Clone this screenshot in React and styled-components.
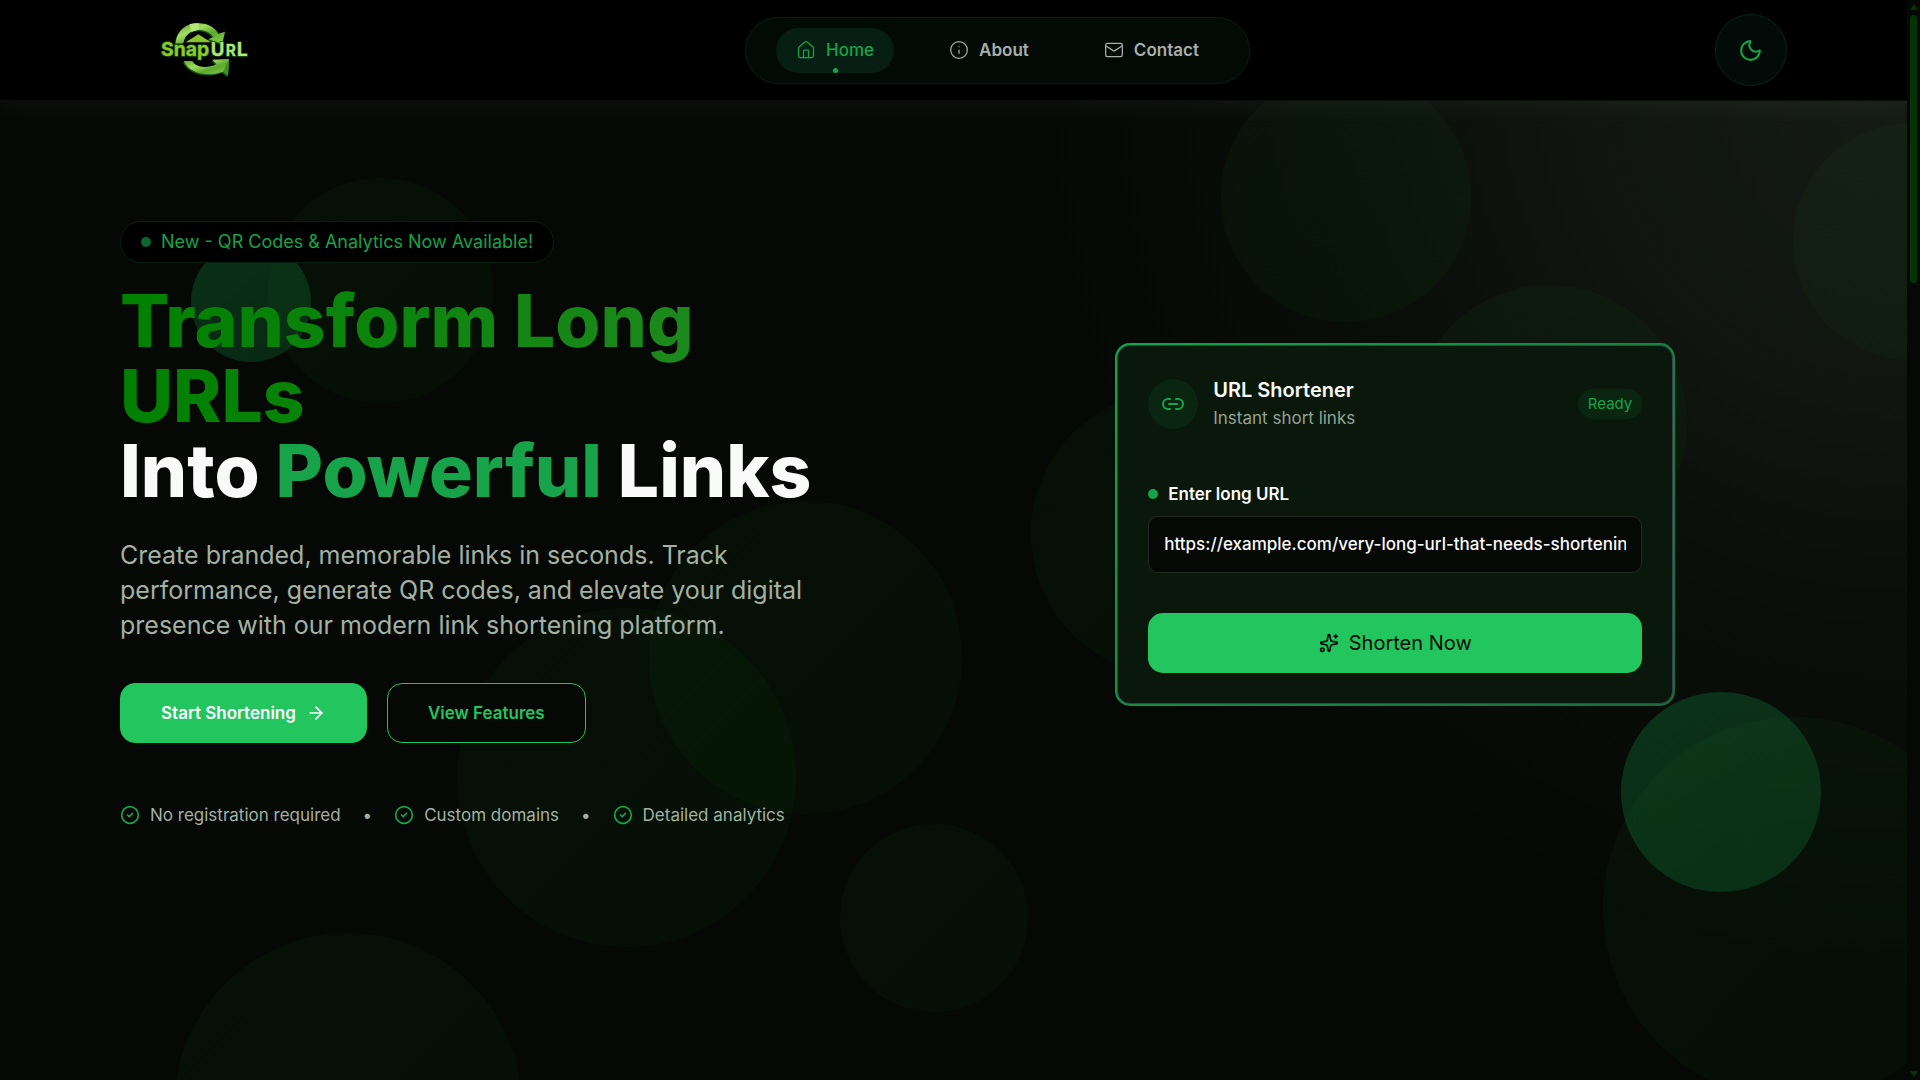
import React from "react";
import styled, { createGlobalStyle, css } from "styled-components";
import {
  ArrowRight,
  CircleCheck,
  House,
  Info,
  Link2,
  Mail,
  Moon,
  Sparkles,
} from "lucide-react";

const navLinks = [
  { label: "Home", icon: House, active: true },
  { label: "About", icon: Info },
  { label: "Contact", icon: Mail },
];

const perks = ["No registration required", "Custom domains", "Detailed analytics"];

const bubbles = [
  { x: 268, y: 178, size: 225 },
  { x: 1221, y: 72, size: 250 },
  { x: 1793, y: 123, size: 237 },
  { x: 1412, y: 285, size: 275 },
  { x: 1031, y: 392, size: 284 },
  { x: 649, y: 501, size: 313 },
  { x: 457, y: 608, size: 339 },
  { x: 840, y: 824, size: 188 },
  { x: 174, y: 933, size: 348 },
  { x: 1603, y: 717, size: 383 },
  { x: 191, y: 242, size: 120, bright: true },
  { x: 1621, y: 692, size: 200, bright: true },
];

function Logo() {
  return (
    <svg width="100" height="70" viewBox="-15 0 300 210" role="img" aria-label="SnapUrl">
      <defs>
        <linearGradient id="arc" x1="0" y1="0" x2="1" y2="1">
          <stop offset="0" stopColor="#4f9d22" />
          <stop offset="0.35" stopColor="#a3dc62" />
          <stop offset="0.6" stopColor="#5aa92c" />
          <stop offset="1" stopColor="#8fd04f" />
        </linearGradient>
        <linearGradient id="word" x1="0" y1="0" x2="1" y2="0">
          <stop offset="0" stopColor="#8cc925" />
          <stop offset="1" stopColor="#8fcb2e" />
        </linearGradient>
      </defs>
      <g fill="#14511a" transform="translate(-3 4)">
        <path d="M62 85C65 45 95 25 130 25C160 25 180 38 190 56L210 50L202 86L160 73L175 66C165 52 150 45 130 45C105 47 90 60 85 85Z" />
        <path d="M86 138L112 138C120 155 150 163 185 148L172 134L222 132L219 182L204 170C160 186 105 178 86 138Z" />
      </g>
      <g fill="url(#arc)">
        <path d="M62 85C65 45 95 25 130 25C160 25 180 38 190 56L210 50L202 86L160 73L175 66C165 52 150 45 130 45C105 47 90 60 85 85Z" />
        <path d="M86 138L112 138C120 155 150 163 185 148L172 134L222 132L219 182L204 170C160 186 105 178 86 138Z" />
      </g>
      <path d="M103 28C112 25 122 24 132 25L130 45C122 46 116 48 110 51Z" fill="#b5e878" />
      <path d="M222 132L219 182L204 170Z" fill="#3d8f22" />
      <path d="M92 82L130 58L168 82Z" fill="#86c52c" />
      <g
        fontFamily="Inter, sans-serif"
        fontWeight="700"
        stroke="#17591b"
        strokeWidth="4"
        paintOrder="stroke"
      >
        <text x="18" y="122" fontSize="58" fill="url(#word)">Snap</text>
        <g fill="#b0e676">
          <text x="167" y="124" fontSize="56">U</text>
          <text x="212" y="124" fontSize="46">R</text>
          <text x="245" y="124" fontSize="58">L</text>
        </g>
      </g>
    </svg>
  );
}

function Header() {
  return (
    <HeaderBar>
      <LogoLink href="#home">
        <Logo />
      </LogoLink>
      <Nav>
        {navLinks.map(({ label, icon: Icon, active }) => (
          <NavLink key={label} href={`#${label.toLowerCase()}`} $active={active}>
            <Icon size={20} strokeWidth={1.5} />
            {label}
          </NavLink>
        ))}
      </Nav>
      <ThemeButton type="button" aria-label="Toggle theme">
        <Moon size={25} />
      </ThemeButton>
    </HeaderBar>
  );
}

function ShortenerCard() {
  return (
    <CardFrame>
      <Card onSubmit={(e) => e.preventDefault()}>
        <CardHeader>
          <CardIcon>
            <Link2 size={24} />
          </CardIcon>
          <CardTitles>
            <h2>URL Shortener</h2>
            <p>Instant short links</p>
          </CardTitles>
          <Status>Ready</Status>
        </CardHeader>
        <Label htmlFor="long-url">
          <Dot />
          Enter long URL
        </Label>
        <UrlInput
          id="long-url"
          type="text"
          defaultValue="https://example.com/very-long-url-that-needs-shortening"
        />
        <SubmitButton type="submit">
          <Sparkles size={20} />
          Shorten Now
        </SubmitButton>
      </Card>
    </CardFrame>
  );
}

function Hero() {
  return (
    <HeroSection>
      <Intro>
        <Badge>
          <Dot $dim />
          New - QR Codes &amp; Analytics Now Available!
        </Badge>
        <Title>
          <TitleGradient>Transform Long URLs</TitleGradient>
          Into <TitleAccent>Powerful</TitleAccent> Links
        </Title>
        <Lead>
          Create branded, memorable links in seconds. Track performance, generate
          QR codes, and elevate your digital presence with our modern link
          shortening platform.
        </Lead>
        <Actions>
          <ActionLink href="#shorten" $primary>
            Start Shortening
            <ArrowRight size={20} />
          </ActionLink>
          <ActionLink href="#features">View Features</ActionLink>
        </Actions>
        <Perks>
          {perks.map((perk, i) => (
            <React.Fragment key={perk}>
              {i > 0 && <span>•</span>}
              <Perk>
                <CircleCheck size={20} strokeWidth={2} />
                {perk}
              </Perk>
            </React.Fragment>
          ))}
        </Perks>
      </Intro>
      <ShortenerCard />
    </HeroSection>
  );
}

export default function App() {
  return (
    <Screen>
      <GlobalStyle />
      <Page>
        <Backdrop>
          {bubbles.map((b) => (
            <Bubble key={`${b.x}-${b.y}`} $x={b.x} $y={b.y} $size={b.size} $bright={b.bright} />
          ))}
        </Backdrop>
        <Header />
        <Hero />
      </Page>
      <ScrollTrack>
        <ScrollArrow />
        <ScrollThumb />
        <ScrollArrow $down />
      </ScrollTrack>
    </Screen>
  );
}

const GlobalStyle = createGlobalStyle`
  * {
    box-sizing: border-box;
    margin: 0;
    padding: 0;
  }

  body {
    background-color: #050805;
    color: #fafafa;
    font-family: "Inter", sans-serif;
    font-size: 17px;
  }

  a {
    text-decoration: none;
  }

  button,
  input {
    font-family: inherit;
  }
`;

const Screen = styled.div`
  display: flex;
  height: 100vh;
`;

const Page = styled.div`
  position: relative;
  flex: 1;
  min-width: 0;
  overflow: hidden;
  background: radial-gradient(
    circle at 100% 80px,
    #151b15 0,
    #101510 320px,
    #0a0e0a 560px,
    #050805 880px
  );
`;

const Backdrop = styled.div`
  position: absolute;
  inset: 0;
  overflow: hidden;
`;

const Bubble = styled.div`
  position: absolute;
  left: ${(p) => p.$x}px;
  top: ${(p) => p.$y}px;
  width: ${(p) => p.$size}px;
  height: ${(p) => p.$size}px;
  border-radius: 50%;
  background: ${(p) =>
    p.$bright
      ? "linear-gradient(135deg, rgba(22, 163, 74, 0.26), rgba(22, 163, 74, 0.2))"
      : "linear-gradient(135deg, rgba(34, 160, 34, 0.05), rgba(0, 128, 0, 0.06))"};
`;

const HeaderBar = styled.header`
  position: relative;
  display: flex;
  align-items: center;
  justify-content: space-between;
  padding: 14px 120px;
  background-color: #000;
  border-bottom: 1px solid #0a0f0b;
  box-shadow: 0 4px 30px rgba(255, 255, 255, 0.05);
`;

const LogoLink = styled.a`
  display: flex;
  justify-content: center;
  width: 160px;
`;

const Nav = styled.nav`
  display: flex;
  gap: 35px;
  padding: 10px 30px;
  background-color: #020a05;
  border: 1px solid #062012;
  border-radius: 34px;
`;

const NavLink = styled.a`
  position: relative;
  display: flex;
  align-items: center;
  gap: 10px;
  padding: 12px 20px;
  border-radius: 25px;
  color: #aaaeaa;
  font-weight: 600;
  line-height: 21px;

  ${(p) =>
    p.$active &&
    css`
      background-color: #071f12;
      color: #16a34a;
      font-weight: 500;

      &::after {
        content: "";
        position: absolute;
        bottom: 0;
        left: calc(50% - 2px);
        width: 5px;
        height: 5px;
        border-radius: 50%;
        background-color: #16a34a;
      }
    `}
`;

const ThemeButton = styled.button`
  display: grid;
  place-items: center;
  width: 72px;
  height: 72px;
  border: 1px solid #08261a;
  border-radius: 50%;
  background-color: #020b07;
  color: #16a34a;
`;

const HeroSection = styled.main`
  position: relative;
  display: grid;
  grid-template-columns: 1fr 1fr;
  align-items: center;
  gap: 100px;
  padding: 120px;
`;

const Intro = styled.section`
  max-width: 700px;
`;

const Dot = styled.span`
  width: 10px;
  height: 10px;
  border-radius: 50%;
  background-color: ${(p) => (p.$dim ? "#0e6630" : "#16a34a")};
`;

const Badge = styled.div`
  display: inline-flex;
  align-items: center;
  gap: 10px;
  padding: 10px 20px;
  border: 1px solid #05200f;
  border-radius: 21px;
  background-color: #000;
  color: #16a34a;
  font-size: 18px;
  line-height: 20px;
`;

const Title = styled.h1`
  margin-top: 20px;
  font-size: 73px;
  font-weight: 800;
  line-height: 75px;
`;

const TitleGradient = styled.span`
  display: block;
  background: linear-gradient(90deg, #008000, #228b22);
  background-clip: text;
  color: transparent;
`;

const TitleAccent = styled.span`
  color: #16a34a;
`;

const Lead = styled.p`
  margin-top: 30px;
  color: #a3b1a3;
  font-size: 25px;
  line-height: 35px;
`;

const Actions = styled.div`
  display: flex;
  gap: 20px;
  margin-top: 40px;
`;

const ActionLink = styled.a`
  display: flex;
  align-items: center;
  gap: 10px;
  height: 60px;
  padding: 0 40px;
  border: 1px solid #22c55e;
  border-radius: 15px;
  background-color: ${(p) => (p.$primary ? "#22c55e" : "#050805")};
  color: ${(p) => (p.$primary ? "#fff" : "#22c55e")};
  font-weight: 600;
`;

const Perks = styled.div`
  display: flex;
  align-items: center;
  gap: 22px;
  margin-top: 60px;
  color: #a3b1a3;
  line-height: 24px;
`;

const Perk = styled.div`
  display: flex;
  align-items: center;
  gap: 10px;

  svg {
    color: #16a34a;
  }
`;

const CardFrame = styled.div`
  justify-self: center;
  width: 100%;
  max-width: 560px;
  padding: 2px;
  border-radius: 15px;
  background: linear-gradient(135deg, #16a34a, #1a6b3c);
`;

const Card = styled.form`
  display: flex;
  flex-direction: column;
  padding: 30px;
  border: 1px solid #374151;
  border-radius: 13px;
  background-color: #09180b;
`;

const CardHeader = styled.div`
  display: flex;
  align-items: center;
  gap: 15px;
`;

const CardIcon = styled.div`
  display: grid;
  place-items: center;
  width: 50px;
  height: 50px;
  border-radius: 50%;
  background-color: #0a2611;
  color: #16a34a;
`;

const CardTitles = styled.div`
  flex: 1;

  h2 {
    font-size: 20px;
    font-weight: 600;
    line-height: 28px;
  }

  p {
    color: #94a394;
    line-height: 28px;
  }
`;

const Status = styled.span`
  padding: 0 10px;
  border-radius: 15px;
  background-color: #0a2611;
  color: #16a34a;
  font-size: 15px;
  line-height: 30px;
`;

const Label = styled.label`
  display: flex;
  align-items: center;
  gap: 10px;
  margin-top: 50px;
  font-weight: 600;
  line-height: 24px;
`;

const UrlInput = styled.input`
  width: 100%;
  height: 57px;
  margin-top: 10px;
  padding: 0 15px;
  border: 1px solid #1f2b20;
  border-radius: 10px;
  background-color: #050805;
  color: #fafafa;
  font-size: 17px;
  font-weight: 500;
  outline: none;
`;

const SubmitButton = styled.button`
  display: flex;
  align-items: center;
  justify-content: center;
  gap: 10px;
  height: 60px;
  margin-top: 40px;
  border: none;
  border-radius: 15px;
  background-color: #22c55e;
  color: #050805;
  font-size: 20px;
`;

const ScrollTrack = styled.div`
  display: flex;
  flex-direction: column;
  align-items: center;
  gap: 5px;
  width: 13px;
  padding: 4px 0 3px;
  background-color: #050805;
`;

const ScrollThumb = styled.div`
  width: 7px;
  height: 25%;
  margin-bottom: auto;
  border-radius: 4px;
  background-color: #053305;
`;

const ScrollArrow = styled.div`
  border: 4px solid transparent;
  border-top-width: 0;
  border-bottom: 6px solid #053305;
  transform: ${(p) => (p.$down ? "rotate(180deg)" : "none")};
`;
